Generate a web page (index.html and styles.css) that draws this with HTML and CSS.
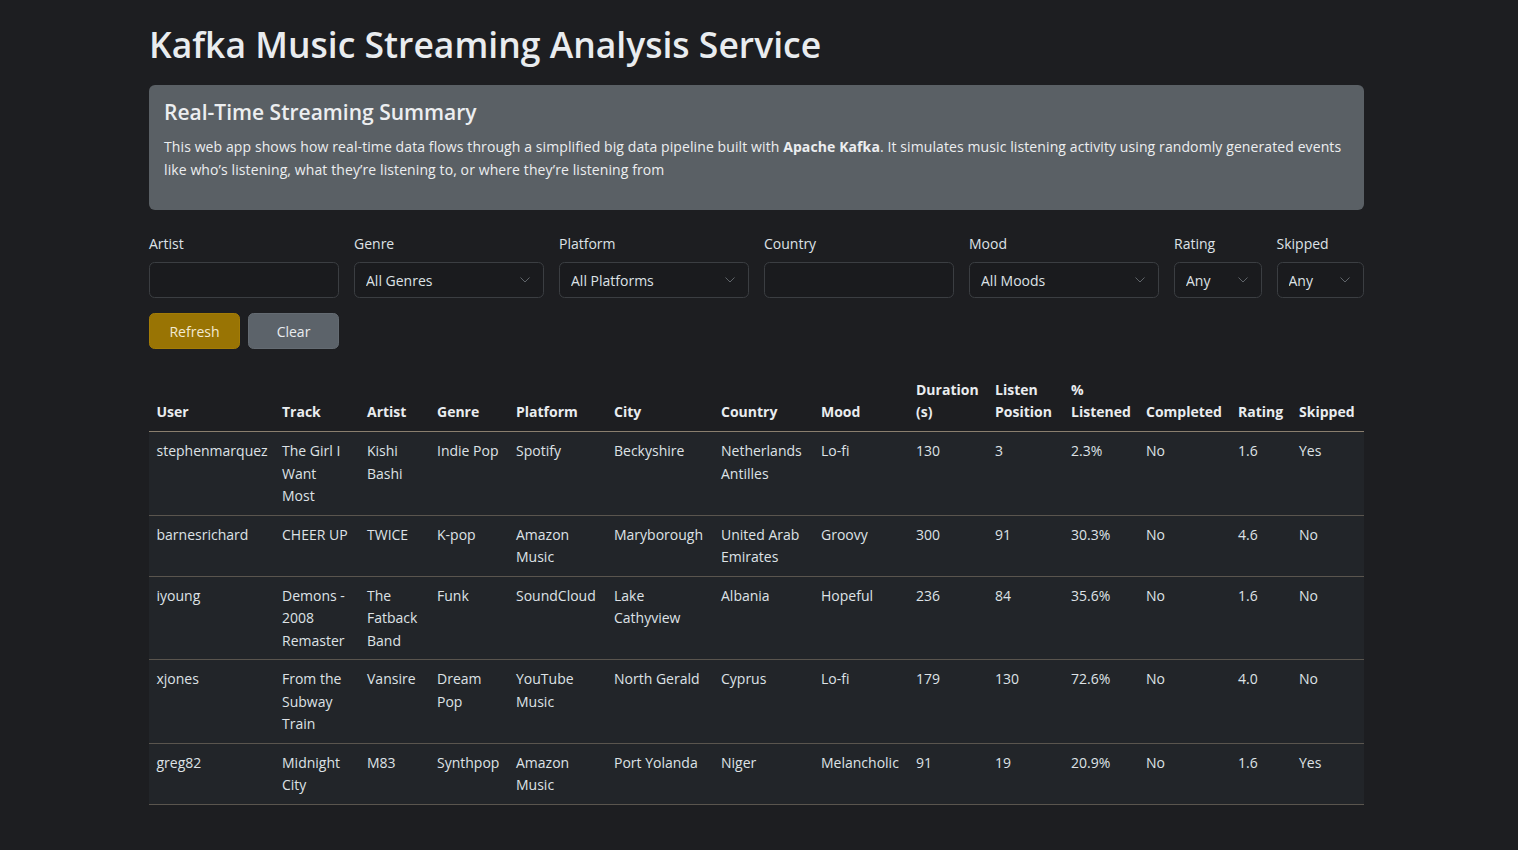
FILE: index.html
```html
<!DOCTYPE html>
<html lang="en">
<head>
<meta charset="utf-8">
<title>Kafka Music Streaming Analysis Service</title>
<link rel="stylesheet" href="styles.css">
</head>
<body>
<div class="container">
  <h1 class="title">Kafka Music Streaming Analysis Service</h1>

  <section class="summary">
    <h4 class="summary-title">Real-Time Streaming Summary</h4>
    <p class="summary-text">This web app shows how real-time data flows through a simplified big data pipeline built with <strong>Apache Kafka</strong>. It simulates music listening activity using randomly generated events like who’s listening, what they’re listening to, or where they’re listening from</p>
  </section>

  <form class="filters">
    <div class="field">
      <label class="form-label">Artist</label>
      <input class="form-control" type="text">
    </div>
    <div class="field">
      <label class="form-label">Genre</label>
      <div class="select-wrap">
        <select class="form-select"><option>All Genres</option></select>
        <svg class="chev" width="16" height="12" viewBox="0 0 16 12"><path d="M3.5 3.5l4.5 4.5 4.5-4.5" fill="none" stroke="#5f6469" stroke-width="1"/></svg>
      </div>
    </div>
    <div class="field">
      <label class="form-label">Platform</label>
      <div class="select-wrap">
        <select class="form-select"><option>All Platforms</option></select>
        <svg class="chev" width="16" height="12" viewBox="0 0 16 12"><path d="M3.5 3.5l4.5 4.5 4.5-4.5" fill="none" stroke="#5f6469" stroke-width="1"/></svg>
      </div>
    </div>
    <div class="field">
      <label class="form-label">Country</label>
      <input class="form-control" type="text">
    </div>
    <div class="field">
      <label class="form-label">Mood</label>
      <div class="select-wrap">
        <select class="form-select"><option>All Moods</option></select>
        <svg class="chev" width="16" height="12" viewBox="0 0 16 12"><path d="M3.5 3.5l4.5 4.5 4.5-4.5" fill="none" stroke="#5f6469" stroke-width="1"/></svg>
      </div>
    </div>
    <div class="field">
      <label class="form-label">Rating</label>
      <div class="select-wrap">
        <select class="form-select"><option>Any</option></select>
        <svg class="chev" width="16" height="12" viewBox="0 0 16 12"><path d="M3.5 3.5l4.5 4.5 4.5-4.5" fill="none" stroke="#5f6469" stroke-width="1"/></svg>
      </div>
    </div>
    <div class="field">
      <label class="form-label">Skipped</label>
      <div class="select-wrap">
        <select class="form-select"><option>Any</option></select>
        <svg class="chev" width="16" height="12" viewBox="0 0 16 12"><path d="M3.5 3.5l4.5 4.5 4.5-4.5" fill="none" stroke="#5f6469" stroke-width="1"/></svg>
      </div>
    </div>
    <div class="actions">
      <button type="button" class="btn btn-warning">Refresh</button>
      <button type="button" class="btn btn-secondary">Clear</button>
    </div>
  </form>

  <table class="table">
    <colgroup>
      <col class="c-user"><col class="c-track"><col class="c-artist"><col class="c-genre">
      <col class="c-platform"><col class="c-city"><col class="c-country"><col class="c-mood">
      <col class="c-duration"><col class="c-position"><col class="c-pct"><col class="c-completed">
      <col class="c-rating"><col class="c-skipped">
    </colgroup>
    <thead>
      <tr>
        <th>User</th><th>Track</th><th>Artist</th><th>Genre</th><th>Platform</th><th>City</th><th>Country</th><th>Mood</th><th>Duration (s)</th><th>Listen Position</th><th>% Listened</th><th>Completed</th><th>Rating</th><th>Skipped</th>
      </tr>
    </thead>
    <tbody>
      <tr>
        <td>stephenmarquez</td><td>The Girl I Want Most</td><td>Kishi Bashi</td><td>Indie Pop</td><td>Spotify</td><td>Beckyshire</td><td>Netherlands Antilles</td><td>Lo-fi</td><td>130</td><td>3</td><td>2.3%</td><td>No</td><td>1.6</td><td>Yes</td>
      </tr>
      <tr>
        <td>barnesrichard</td><td>CHEER UP</td><td>TWICE</td><td>K-pop</td><td>Amazon Music</td><td>Maryborough</td><td>United Arab Emirates</td><td>Groovy</td><td>300</td><td>91</td><td>30.3%</td><td>No</td><td>4.6</td><td>No</td>
      </tr>
      <tr>
        <td>iyoung</td><td>Demons - 2008 Remaster</td><td>The Fatback Band</td><td>Funk</td><td>SoundCloud</td><td>Lake Cathyview</td><td>Albania</td><td>Hopeful</td><td>236</td><td>84</td><td>35.6%</td><td>No</td><td>1.6</td><td>No</td>
      </tr>
      <tr>
        <td>xjones</td><td>From the Subway Train</td><td>Vansire</td><td>Dream Pop</td><td>YouTube Music</td><td>North Gerald</td><td>Cyprus</td><td>Lo-fi</td><td>179</td><td>130</td><td>72.6%</td><td>No</td><td>4.0</td><td>No</td>
      </tr>
      <tr>
        <td>greg82</td><td>Midnight City</td><td>M83</td><td>Synthpop</td><td>Amazon Music</td><td>Port Yolanda</td><td>Niger</td><td>Melancholic</td><td>91</td><td>19</td><td>20.9%</td><td>No</td><td>1.6</td><td>Yes</td>
      </tr>
    </tbody>
  </table>
</div>
</body>
</html>
```
FILE: styles.css
```css
* { box-sizing: border-box; }

html, body {
  margin: 0;
  padding: 0;
}

body {
  background: #1d1e21;
  color: #dee2e6;
  font-family: "Open Sans", "Noto Sans", sans-serif;
  font-size: 14px;
  line-height: 22.5px;
}

.container {
  width: 1215px;
  margin-left: 149px;
  padding-top: 23px;
  padding-bottom: 30px;
}

.title {
  margin: 0 0 20px 0;
  font-size: 35.5px;
  line-height: 42px;
  font-weight: 600;
  color: #e9ecef;
}

.summary {
  background: #5a6065;
  border-radius: 6px;
  padding: 15px;
  color: #eceef0;
}

.summary-title {
  margin: 0 0 11px 0;
  font-size: 21px;
  line-height: 25.2px;
  font-weight: 600;
}

.summary-text {
  margin: 0 0 14px 0;
  letter-spacing: 0.1px;
}

.summary-text strong {
  font-weight: 700;
}

.filters {
  margin-top: 22.5px;
  display: grid;
  grid-template-columns: repeat(5, 190px) 87.5px 87.5px;
  column-gap: 15px;
  row-gap: 15px;
}

.field {
  display: flex;
  flex-direction: column;
}

.form-label {
  margin-bottom: 7px;
  color: #dee2e6;
}

.form-control,
.form-select {
  width: 100%;
  height: 36px;
  background: #1a1b1e;
  border: 1px solid #3b3e42;
  border-radius: 5.6px;
  color: #dee2e6;
  font-family: inherit;
  font-size: 14px;
  padding: 0 11px;
  outline: none;
}

.form-select {
  appearance: none;
  -webkit-appearance: none;
  padding-right: 34px;
}

.select-wrap {
  position: relative;
}

.chev {
  position: absolute;
  right: 11px;
  top: 12px;
  pointer-events: none;
}

.actions {
  grid-column: 1 / -1;
  display: flex;
  gap: 8px;
}

.btn {
  width: 91px;
  height: 36px;
  border-radius: 5.6px;
  font-family: inherit;
  font-size: 14px;
  cursor: pointer;
}

.btn-warning {
  background: #997404;
  border: 1px solid #a37c06;
  color: #f3ead2;
}

.btn-secondary {
  background: #5c636a;
  border: 1px solid #646b72;
  color: #e9ecef;
}

.table {
  margin-top: 22px;
  width: 1215px;
  table-layout: fixed;
  border-collapse: collapse;
}

.c-user { width: 125.5px; }
.c-track { width: 85px; }
.c-artist { width: 70px; }
.c-genre { width: 79px; }
.c-platform { width: 98px; }
.c-city { width: 107px; }
.c-country { width: 100px; }
.c-mood { width: 95px; }
.c-duration { width: 79px; }
.c-position { width: 76px; }
.c-pct { width: 75px; }
.c-completed { width: 92px; }
.c-rating { width: 61px; }
.c-skipped { width: 72.5px; }

.table th,
.table td {
  padding: 7.5px;
  text-align: left;
  vertical-align: top;
}

.table thead th {
  vertical-align: bottom;
  font-weight: 700;
  color: #e9ecef;
  border-bottom: 1px solid #8a7f6e;
}

.table tbody td {
  background: #222529;
  border-bottom: 1px solid #5a554e;
  padding-top: 8px;
  padding-bottom: 7px;
}
```
